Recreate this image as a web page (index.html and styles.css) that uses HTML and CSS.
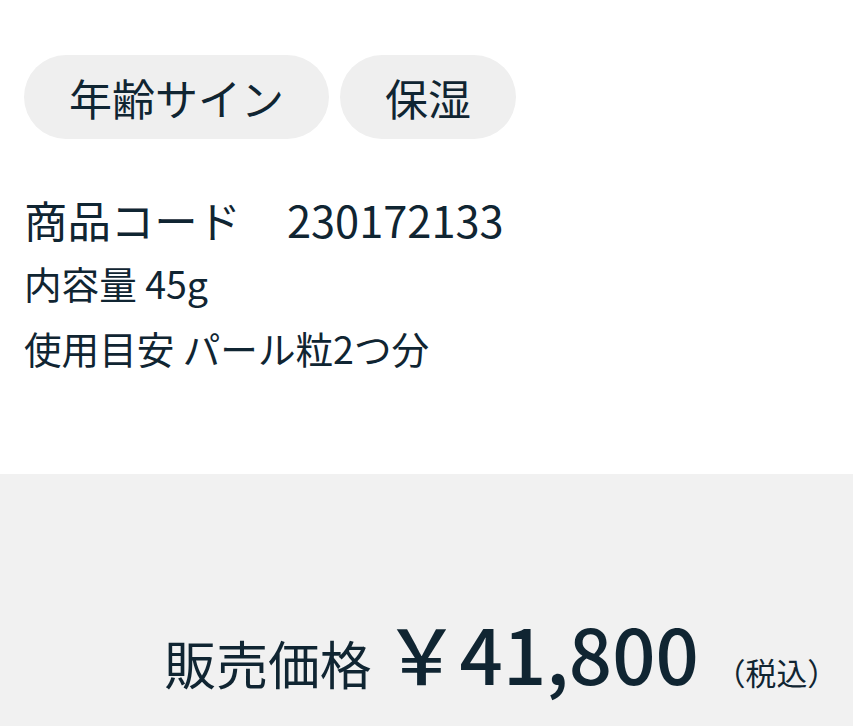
FILE: index.html
```html
<!DOCTYPE html>
<html lang="ja">
<head>
<meta charset="utf-8">
<link rel="stylesheet" href="styles.css">
</head>
<body>
<section class="info">
  <ul class="tags">
    <li class="tag">年齢サイン</li>
    <li class="tag">保湿</li>
  </ul>
  <p class="code"><span class="code-label">商品コード</span><span class="code-value">230172133</span></p>
  <p class="spec">内容量 45g</p>
  <p class="spec">使用目安 パール粒2つ分</p>
</section>
<section class="price-area">
  <div class="price-row">
    <span class="price-label">販売価格</span>
    <span class="price-value">￥41,800</span>
    <span class="price-tax">（税込）</span>
  </div>
</section>
</body>
</html>
```
FILE: styles.css
```css
html, body {
  margin: 0;
  padding: 0;
  background: #ffffff;
}
body {
  font-family: "Noto Sans CJK JP", "Noto Sans", sans-serif;
  color: #102532;
  height: 726px;
  display: flex;
  flex-direction: column;
}
.info {
  padding: 55px 24px 0;
  height: 474px;
  box-sizing: border-box;
  flex: none;
}
.tags {
  list-style: none;
  margin: 0;
  padding: 0;
  display: flex;
  gap: 11px;
}
.tag {
  background: #efefef;
  border-radius: 42px;
  height: 84px;
  padding: 0 45px;
  display: flex;
  align-items: center;
  font-size: 43px;
  line-height: 1;
}
.code {
  margin: 52px 0 0;
  font-size: 43.4px;
  line-height: 56px;
  display: flex;
}
.code-label {
  margin-right: 46px;
}
.spec {
  margin: 6px 0 0;
  font-size: 37.6px;
  line-height: 59px;
}
.price-area {
  flex: 1;
  background: #f1f1f1;
  display: flex;
  justify-content: flex-end;
  padding: 0 15px 0 0;
}
.price-row {
  margin-top: 123px;
  display: flex;
  align-items: baseline;
}
.price-label {
  font-size: 51.8px;
  margin-right: 12px;
}
.price-value {
  font-size: 76px;
  font-weight: 500;
  margin-right: 16px;
}
.price-tax {
  font-size: 30.8px;
}
```
